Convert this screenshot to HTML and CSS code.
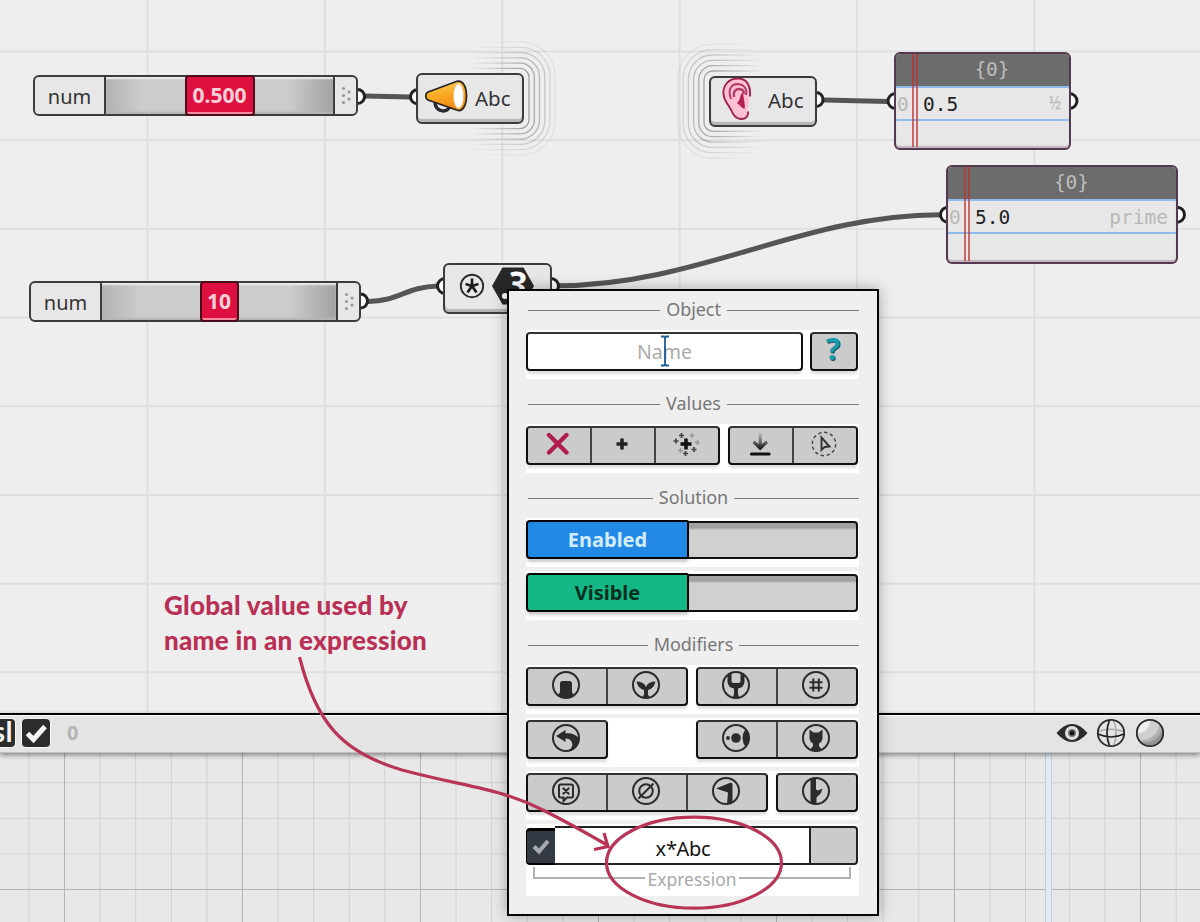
FILE: index.html
```html
<!DOCTYPE html>
<html lang="en">
<head>
<meta charset="UTF-8" />
<meta name="viewport" content="width=device-width, initial-scale=1" />
<title>Global value in an expression</title>
<link rel="stylesheet" href="styles.css">
</head>
<body>
  <main class="canvas">
    <!-- wires, ports and broadcast rings -->
    <svg class="wires" width="1200" height="713" viewBox="0 0 1200 713">
      <defs>
        <linearGradient id="fade-l" gradientUnits="userSpaceOnUse" x1="470" y1="0" x2="525" y2="0">
          <stop offset="0" stop-color="#fff" stop-opacity="0" /><stop offset="1" stop-color="#fff" />
        </linearGradient>
        <linearGradient id="fade-r" gradientUnits="userSpaceOnUse" x1="708" y1="0" x2="763" y2="0">
          <stop offset="0" stop-color="#fff" /><stop offset="1" stop-color="#fff" stop-opacity="0" />
        </linearGradient>
        <mask id="mask-l" maskUnits="userSpaceOnUse" x="460" y="30" width="110" height="140"><rect x="460" y="30" width="110" height="140" fill="url(#fade-l)" /></mask>
        <mask id="mask-r" maskUnits="userSpaceOnUse" x="670" y="30" width="110" height="140"><rect x="670" y="30" width="110" height="140" fill="url(#fade-r)" /></mask>
      </defs>
      <g mask="url(#mask-l)" fill="none" stroke="#222" stroke-width="1.3">
        <rect x="440" y="68.3" width="89" height="60.4" rx="9" opacity=".38" />
        <rect x="440" y="63.1" width="94.3" height="70.8" rx="14" opacity=".33" />
        <rect x="440" y="57.9" width="99.5" height="81.2" rx="19" opacity=".26" />
        <rect x="440" y="52.6" width="104.8" height="91.8" rx="24" opacity=".19" />
        <rect x="440" y="47.4" width="110" height="102.2" rx="29" opacity=".12" />
        <rect x="440" y="42.2" width="115.2" height="112.6" rx="34" opacity=".06" />
      </g>
      <g mask="url(#mask-r)" fill="none" stroke="#222" stroke-width="1.3">
        <rect x="704" y="71" width="100" height="60.4" rx="9" opacity=".38" />
        <rect x="698.8" y="65.7" width="105" height="71" rx="14" opacity=".33" />
        <rect x="693.6" y="60.3" width="110" height="81.8" rx="19" opacity=".26" />
        <rect x="688.4" y="55" width="115" height="92.4" rx="24" opacity=".19" />
        <rect x="683.2" y="49.7" width="120" height="103" rx="29" opacity=".12" />
        <rect x="678" y="44.4" width="125" height="113.6" rx="34" opacity=".06" />
      </g>
      <g class="wire">
        <path d="M365 96L410 97" />
        <path d="M824 100L888 101.5" />
        <path d="M368 301.5C400 301 405 287 438 286" />
        <path d="M556 285.8C700 285.5 800 215 940 214.7" />
      </g>
      <g class="port">
        <circle cx="357.5" cy="96.5" r="7" /><circle cx="417.5" cy="96.8" r="7" />
        <circle cx="816" cy="99.5" r="7" /><circle cx="895.5" cy="101" r="7.5" />
        <circle cx="1069.5" cy="101" r="7.5" /><circle cx="948" cy="214.7" r="7.5" />
        <circle cx="1177" cy="214.7" r="7.5" /><circle cx="360.5" cy="301" r="7" />
        <circle cx="445" cy="286" r="7.5" /><circle cx="551" cy="286" r="7.5" />
      </g>
    </svg>

    <div class="node slider slider-a">
      <span class="slider-name">num</span>
      <span class="slider-track"><b class="knob">0.500</b></span>
      <span class="slider-grip"><svg width="12" height="20" viewBox="0 0 12 20"><g fill="#999"><circle cx="2.500" cy="2.500" r="1.600"/><circle cx="8" cy="6" r="1.600"/><circle cx="2.500" cy="9.500" r="1.600"/><circle cx="8" cy="13" r="1.600"/><circle cx="2.500" cy="16.500" r="1.600"/></g></svg></span>
    </div>

    <div class="node slider slider-b">
      <span class="slider-name">num</span>
      <span class="slider-track"><b class="knob">10</b></span>
      <span class="slider-grip"><svg width="12" height="20" viewBox="0 0 12 20"><g fill="#999"><circle cx="2.500" cy="2.500" r="1.600"/><circle cx="8" cy="6" r="1.600"/><circle cx="2.500" cy="9.500" r="1.600"/><circle cx="8" cy="13" r="1.600"/><circle cx="2.500" cy="16.500" r="1.600"/></g></svg></span>
    </div>

    <div class="node param sender">
      <svg width="44" height="36" viewBox="0 0 44 36">
        <defs><linearGradient id="horn" x1="0" y1="0" x2=".3" y2="1"><stop offset="0" stop-color="#ffd968"/><stop offset=".45" stop-color="#fbb02a"/><stop offset="1" stop-color="#f08a10"/></linearGradient></defs>
        <path d="M11 24C12 34 25 34 25.500 27" fill="none" stroke="#262a2e" stroke-width="3.500"/>
        <path d="M4 13L33 2.300C39 1 42.500 8 42.500 17C42.500 26 39 32.500 34 31.500L4 21C1 19.500 1 14.500 4 13Z" fill="url(#horn)" stroke="#262320" stroke-width="1.700"/>
        <ellipse cx="34.500" cy="17" rx="5.200" ry="12.500" fill="#fff" stroke="#f4b868" stroke-width="1"/>
      </svg>
      <span>Abc</span>
    </div>

    <div class="node param receiver">
      <svg width="32" height="44" viewBox="0 0 32 44">
        <path d="M27 19.500C28.500 9 25 1.500 16 1.500C6 1.500 .8 9 1.500 17C2 24 5.500 26.500 8 31C11 37 13 42 19.500 42C25 42 26.500 38 26 34.500C25 31 28 26 27 19.500Z" fill="#ffc0d2"/>
        <path d="M28 19.500C29 9 25 1.500 16 1.500C6 1.500 .8 9 1.500 17C2 24 5.500 26.500 8 31C11 37 13 42 19.500 42C25 42 26.500 38 26 34.500" fill="none" stroke="#9c2350" stroke-width="1.900"/>
        <path d="M9 22C6 14 8 7.500 15 7C22 7 25.500 12 24 18" fill="none" stroke="#b13864" stroke-width="1.900"/>
        <path d="M12 20C11 15 13 12 17 12C20 12 22.500 14 21.500 17" fill="none" stroke="#b13864" stroke-width="2.500"/>
        <path d="M21 16C17 17 20 21 15 26C18 28 20 31 22.500 32C23.500 28 22 24 21 16Z" fill="#b51e55"/>
      </svg>
      <span>Abc</span>
    </div>

    <div class="node param multiply">
      <svg width="92" height="46" viewBox="0 0 92 46">
        <circle cx="15" cy="21" r="11.200" fill="none" stroke="#2b2b2b" stroke-width="1.900"/>
        <path d="M15 13.500V21L8.500 19M15 21L21.500 19M15 21L10.500 27.500M15 21L19.500 27.500" fill="none" stroke="#1c1c1c" stroke-width="2.700"/>
        <path d="M45.500 2.500H66.500L77 21L66.500 39.500H45.500L35 21Z" fill="#272727"/>
        <text class="digit" x="50" y="31" transform="rotate(8 58 22)">3</text>
        <circle cx="48" cy="31" r="3" fill="#fff"/>
      </svg>
    </div>

    <div class="node panel panel-a">
      <div class="panel-head">{0}</div>
      <div class="panel-row"><i>0</i><span>0.5</span><em class="half">½</em></div>
    </div>

    <div class="node panel panel-b">
      <div class="panel-head">{0}</div>
      <div class="panel-row"><i>0</i><span>5.0</span><em>prime</em></div>
    </div>
  </main>

  <section class="statusbar">
    <span class="tile tile-text">sl</span>
    <span class="tile"><svg width="28" height="28" viewBox="0 0 28 28"><path d="M5.500 14.500L11.500 20.500L23 7.500" fill="none" stroke="#f4f4f4" stroke-width="5"/></svg></span>
    <b class="count">0</b>
    <div class="view-icons">
      <svg class="eye" width="32" height="20" viewBox="0 0 32 20"><path d="M.5 10Q16-8 31.500 10Q16 28 .5 10Z" fill="#2c2c2c"/><circle cx="16" cy="10" r="7" fill="#e0e0e0"/><circle cx="16" cy="10" r="4" fill="#777"/><circle cx="16" cy="10" r="2.500" fill="#151515"/></svg>
      <svg width="30" height="30" viewBox="0 0 30 30" fill="none"><path d="M2.500 13.500Q14 9 27.500 13.500M17 1.500Q23 14 17.500 28.500" stroke="#aaa" stroke-width="1.500"/><circle cx="15" cy="15" r="13.200" stroke="#2b2b2b" stroke-width="1.800"/><path d="M2 16Q15 22 28 16M13.500 2Q8.500 15 13.500 28" stroke="#222" stroke-width="1.700"/></svg>
      <svg width="30" height="30" viewBox="0 0 30 30"><circle cx="15" cy="15" r="13.200" fill="#b0b0b0"/><path d="M4 22.500Q22 22 24.500 6A13 13 0 1 0 4 22.500Z" fill="#cfcfcf"/><path d="M2.500 16Q14 14 15.500 2A13 13 0 0 0 2.500 16Z" fill="#efefef"/><path d="M7 25Q24 24 27.500 10A13 13 0 0 1 7 25Z" fill="#949494"/><circle cx="15" cy="15" r="13.200" fill="none" stroke="#2b2b2b" stroke-width="1.800"/></svg>
    </div>
  </section>

  <section class="viewport">
    <div class="view view-left"></div>
    <div class="splitter"></div>
    <div class="view view-right"></div>
  </section>

  <aside class="menu">
    <h2>Object</h2>
    <div class="strip">
      <div class="name-field">Name
        <svg class="caret" width="10" height="32" viewBox="0 0 10 32"><path d="M1 1.500H4L5 3L6 1.500H9M5 3V29M1 30.500H4L5 29L6 30.500H9" fill="none" stroke="#1d5a96" stroke-width="1.800"/></svg>
      </div>
      <div class="group help"><button aria-label="Help"><b>?</b></button></div>
    </div>

    <h2>Values</h2>
    <div class="strip">
      <div class="group three-cols">
        <button aria-label="Clear"><svg width="24" height="24" viewBox="0 0 24 24"><path d="M3 3L20.500 20.500M20.500 3L3 20.500" fill="none" stroke="#b01c50" stroke-width="4.300" stroke-linecap="round"/></svg></button>
        <button aria-label="Add"><svg width="12" height="12" viewBox="0 0 12 12"><path d="M6 .5V11.500M.5 6H11.500" stroke="#222" stroke-width="3.500"/></svg></button>
        <button aria-label="Add many"><svg width="28" height="24" viewBox="0 0 28 24"><path d="M14 6.500V17.500M8.500 12H19.500" stroke="#111" stroke-width="3.500"/><path d="M9.500 1V6M7 3.500H12M4 6.500V11.500M1.500 9H6.500M22 15V20M19.500 17.500H24.500M13.500 19V24M11 21.500H16" stroke="#444" stroke-width="1.700"/><path d="M20 1V6M17.500 3.500H22.500M25.500 8V13M23 10.500H28M8.500 16V21M6 18.500H11" stroke="#999" stroke-width="1.500"/></svg></button>
      </div>
      <div class="group two-cols">
        <button aria-label="Internalise"><svg width="24" height="24" viewBox="0 0 24 24"><defs><linearGradient id="drop" gradientUnits="userSpaceOnUse" x1="0" y1="1" x2="0" y2="16"><stop offset="0" stop-color="#333" stop-opacity=".1"/><stop offset="1" stop-color="#222"/></linearGradient></defs><path d="M10.700 1H13.800V12L18 8.500L20 11L12.250 18.500L4.500 11L6.500 8.500L10.700 12Z" fill="url(#drop)"/><path d="M3.500 22H21" stroke="#111" stroke-width="3.200" stroke-linecap="round"/></svg></button>
        <button aria-label="Select"><svg width="26" height="26" viewBox="0 0 26 26" fill="none"><circle cx="13" cy="13" r="11.700" stroke="#444" stroke-width="1.400" stroke-dasharray="3.400 2.700"/><path d="M10.500 6.500L18.500 15.500L13.500 16L10.500 19Z" stroke="#333" stroke-width="1.900"/></svg></button>
      </div>
    </div>

    <h2>Solution</h2>
    <div class="strip toggle"><b class="on blue">Enabled</b><span class="off"></span></div>
    <div class="strip toggle"><b class="on green">Visible</b><span class="off"></span></div>

    <h2>Modifiers</h2>
    <div class="strip">
      <div class="group half-row">
        <button><svg class="mod" viewBox="0 0 28 28"><circle cx="14" cy="14" r="13"/><path d="M8 12.500Q8 10 10.500 10H17.500Q20 10 20 12.500V21L22 24.500Q14 29.500 6 24.500L8 21Z"/></svg></button>
        <button><svg class="mod" viewBox="0 0 28 28"><circle cx="14" cy="14" r="13"/><path d="M4.500 10.500Q12 10.500 14 16Q16 10.500 23.500 10.500Q22 17.500 16 19V23.500L18 27H10L12 23.500V19Q6 17.500 4.500 10.500Z"/></svg></button>
      </div>
      <div class="group half-row">
        <button><svg class="mod" viewBox="0 0 28 28"><circle cx="14" cy="14" r="13"/><path d="M5.500 4.500L9.500 2V10Q9.500 12 11.500 12H16.500Q18.500 12 18.500 10V2L22.500 4.500V11Q22 16.500 16 17.500V23L17.500 27H10.500L12 23V17.500Q6 16.500 5.500 11Z"/></svg></button>
        <button><svg class="mod" viewBox="0 0 28 28"><circle cx="14" cy="14" r="13"/><path class="line" d="M11.300 7.500V20.500M16.800 7.500V20.500M7.500 11.200H20.500M7.500 16.700H20.500"/></svg></button>
      </div>
    </div>
    <div class="strip">
      <div class="group single">
        <button><svg class="mod" viewBox="0 0 28 28"><circle cx="14" cy="14" r="13"/><path d="M4 12L13.500 6V9.300Q22 8.500 27 14Q26 25 16 27.200Q21.500 23 20 18.500Q18.500 14.500 13.500 14.500V18Z"/></svg></button>
      </div>
      <div class="group half-row">
        <button><svg class="mod" viewBox="0 0 28 28"><circle cx="14" cy="14" r="13"/><circle class="dot" cx="6" cy="14" r="1.900"/><circle class="dot" cx="14" cy="14" r="4.800"/><path d="M23.500 5Q17.500 14 23.500 23Q30.500 14 23.500 5Z"/></svg></button>
        <button><svg class="mod" viewBox="0 0 28 28"><circle cx="14" cy="14" r="13"/><path d="M7.500 5.500L11.500 8.500H16.500L20.500 5.500V14.500Q20 18 17 19.500V22L20 26Q14 28.500 8 26L11 22V19.500Q8 18 7.500 14.500Z"/></svg></button>
      </div>
    </div>
    <div class="strip">
      <div class="group three-mods">
        <button><svg class="mod" viewBox="0 0 28 28"><circle cx="14" cy="14" r="13"/><path class="line" d="M8.500 7.500H19.500Q21 7.500 21 9V19Q21 20.500 19.500 20.500H15L11.500 24V20.500H8.500Q7 20.500 7 19V9Q7 7.500 8.500 7.500ZM10.800 10.800L17.200 17.200M17.200 10.800L10.800 17.200"/></svg></button>
        <button><svg class="mod" viewBox="0 0 28 28"><circle cx="14" cy="14" r="13"/><circle class="line" cx="14" cy="14" r="6.800"/><path class="line" d="M6.500 21.500L21.500 6.500"/></svg></button>
        <button><svg class="mod" viewBox="0 0 28 28"><circle cx="14" cy="14" r="13"/><path d="M4 11.500L17.500 6Q20.500 5 20.500 8V25L15 27.500L16 15.500Z"/></svg></button>
      </div>
      <div class="group single">
        <button><svg class="mod" viewBox="0 0 28 28"><circle cx="14" cy="14" r="13"/><path d="M8.500 2.500L14 1V12.500L16 13.500L20.500 11.500L19 16L14.500 20.500V27H8.500Z"/></svg></button>
      </div>
    </div>
    <div class="strip expression">
      <div class="expr-row">
        <span class="expr-check"><svg width="20" height="18" viewBox="0 0 20 18"><path d="M3 8.500L8 13.500L17 3" fill="none" stroke="#a6a9ad" stroke-width="4.200"/></svg></span>
        <span class="expr-value">x*Abc</span>
        <span class="expr-more"></span>
      </div>
      <div class="bracket"><span class="arm-left"></span><label>Expression</label><span class="arm-right"></span></div>
    </div>
  </aside>

  <div class="note">
    <p>Global value used by<br>name in an expression</p>
  </div>
  <svg class="markup" width="1200" height="922" viewBox="0 0 1200 922">
    <path d="M299.500 657C316 722 341 752 402 770C470 788 500 788 545 811Q578 828 607 845" />
    <path d="M604 833L608 846.500L594 849.500" />
    <ellipse cx="694" cy="862.700" rx="87.500" ry="45.500" />
  </svg>
</body>
</html>
```
FILE: styles.css
```css
/* Reset */
* {
  box-sizing: border-box;
}
body {
  margin: 0;
  width: 1200px;
  height: 922px;
  position: relative;
  overflow: hidden;
  display: flex;
  flex-direction: column;
  font-family: "Noto Sans", "Open Sans", sans-serif;
  color: #333;
}
svg {
  display: block;
}

/* Node canvas */
.canvas {
  position: relative;
  height: 713px;
  background-color: #eeeeee;
  background-image:
    linear-gradient(to right, #dfdfdf 1.5px, transparent 1.5px),
    linear-gradient(to bottom, #dfdfdf 1.5px, transparent 1.5px);
  background-size: 177.4px 88.7px;
  background-position: 146.5px 50.5px;
}
.wires {
  position: absolute;
  left: 0;
  top: 0;
}
.wire {
  fill: none;
  stroke: #555;
  stroke-width: 5;
}
.port {
  fill: #fff;
  stroke: #222;
  stroke-width: 3;
}
.node {
  position: absolute;
  border: 2px solid #3c3c3c;
  border-radius: 6px;
  background: #e7e7e7;
}

/* Sliders */
.slider {
  display: flex;
  height: 41px;
  font-size: 20px;
}
.slider-a {
  left: 33px;
  top: 75px;
  width: 325px;
}
.slider-b {
  left: 29px;
  top: 281px;
  width: 332px;
}
.slider-name {
  width: 71px;
  border-right: 2px solid #3c3c3c;
  text-align: center;
  line-height: 40px;
}
.slider-track {
  flex: 1;
  display: flex;
  justify-content: center;
  background: linear-gradient(to right, #b2b2b2, #ccc 16%, #ccc 80%, #a2a2a2);
  box-shadow: inset 0 3px 2px -1px #ededed, inset 0 -2px 2px #b5b5b5;
}
.slider-grip {
  width: 23px;
  border-left: 2px solid #3c3c3c;
  padding: 9px 0 0 6px;
}
.knob {
  width: 70px;
  height: 41px;
  margin: -2px 0;
  border: 2px solid #4d0a1a;
  border-radius: 4px;
  background: #dd1040;
  box-shadow: inset 0 -3px 0 -1px #f98ba0;
  color: #ffd0d8;
  text-align: center;
  line-height: 37px;
  font-size: 21px;
}
.slider-b .knob {
  width: 39px;
}

/* Params */
.param {
  width: 108px;
  height: 51px;
  display: flex;
  align-items: center;
  font-size: 20.5px;
  box-shadow: inset 0 -3px 1px #b5b5b5;
}
.sender {
  left: 416px;
  top: 73px;
  padding-left: 6px;
  gap: 7px;
}
.sender svg {
  margin-top: -3px;
}
.sender span {
  margin-top: -2px;
}
.receiver {
  left: 709px;
  top: 76px;
  padding-left: 11px;
  gap: 14px;
}
.receiver svg {
  margin-top: -5px;
}
.receiver span {
  margin-top: -3px;
}
.multiply {
  left: 443px;
  top: 263px;
  width: 109px;
  padding-left: 12px;
}
.multiply svg {
  margin-top: -1px;
}
.digit {
  font: bold 34px "Noto Sans", sans-serif;
  fill: #fff;
}

/* Text panels */
.panel {
  border-color: #55394f;
  font: 19.5px "DejaVu Sans Mono", monospace;
  color: #222;
  overflow: hidden;
  box-shadow: inset 0 -2px 1px #c3b5bd;
}
.panel-a {
  left: 894px;
  top: 52px;
  width: 177px;
  height: 98px;
}
.panel-b {
  left: 946px;
  top: 165px;
  width: 232px;
  height: 99px;
}
.panel::after {
  content: "";
  position: absolute;
  left: 16px;
  top: 0;
  bottom: 1px;
  width: 2px;
  border: solid rgba(190, 50, 50, 0.7);
  border-width: 0 2px;
}
.panel-head {
  height: 32px;
  padding-left: 19px;
  background: #6c6c6c;
  color: #bdbdbd;
  text-align: center;
  line-height: 31px;
}
.panel-row {
  display: flex;
  height: 35px;
  padding-right: 8px;
  border: solid #8fbbee;
  border-width: 2px 0;
  line-height: 33px;
}
.panel-row i {
  width: 27px;
  padding-left: 1px;
  font-style: normal;
  color: #b8b8b8;
}
.panel-row em {
  margin-left: auto;
  font-style: normal;
  color: #b8b8b8;
}
.panel-row .half {
  font-family: "Liberation Mono", monospace;
}

/* Status bar */
.statusbar {
  display: flex;
  align-items: center;
  gap: 7px;
  height: 40px;
  padding: 0 35px 2px 0;
  position: relative;
  z-index: 1;
  background: #e4e4e4;
  border-top: 2px solid #000;
  border-bottom: 1px solid #c2c2c2;
  box-shadow: inset 0 1px 0 #fff, 0 2px 5px rgba(0, 0, 0, 0.45);
}
.tile {
  width: 28px;
  height: 28px;
  border-radius: 4px;
  background: #2c2c2c;
  box-shadow: 0 0 0 1px #f5f5f5;
}
.tile-text {
  margin-left: -13px;
  padding-left: 5px;
  color: #f4f4f4;
  font-size: 27px;
  font-weight: 600;
  line-height: 25px;
}
.count {
  margin-left: 10px;
  color: #b5b5b5;
  font-size: 20px;
  line-height: 34px;
}
.view-icons {
  display: flex;
  align-items: center;
  gap: 9px;
  margin-left: auto;
}
.eye {
  margin-right: -1px;
}

/* Viewports */
.viewport {
  flex: 1;
  display: flex;
}
.view {
  background-color: #e8e8e8;
  background-image:
    linear-gradient(to right, #b4b4b4 1px, transparent 1px),
    linear-gradient(to bottom, #b4b4b4 1px, transparent 1px),
    linear-gradient(to right, #d0d0d0 1px, transparent 1px),
    linear-gradient(to bottom, #d0d0d0 1px, transparent 1px);
  background-size: 178px 178px, 178px 178px, 35.6px 35.6px, 35.6px 35.6px;
  background-position: 64px 136px;
}
.view-left {
  width: 1045px;
}
.splitter {
  width: 7px;
  background: #e4eaf5;
  border: solid #c3cfdf;
  border-width: 0 1px;
}
.view-right {
  flex: 1;
  background-position: 88px 136px;
}

/* Context menu */
.menu {
  position: absolute;
  z-index: 2;
  left: 507px;
  top: 289px;
  width: 372px;
  height: 627px;
  padding: 0 17px;
  border: 2px solid #050505;
  background: #efefef;
  box-shadow: 0 0 14px rgba(0, 0, 0, 0.3);
}
.menu h2 {
  display: flex;
  align-items: center;
  gap: 6px;
  height: 39px;
  margin: 6px 1px 0 2px;
  padding-bottom: 3px;
  font-size: 18px;
  font-weight: 400;
  letter-spacing: -0.05px;
  color: #777;
}
.menu h2:first-child {
  margin-top: 0;
}
.menu h2::before,
.menu h2::after {
  content: "";
  flex: 1;
  height: 1px;
  margin-top: 2px;
  background: #7c7c7c;
}
.strip {
  display: flex;
  justify-content: space-between;
  height: 49px;
  margin-right: 1px;
  padding: 2px 1px 0 0;
  background: #fff;
}
.strip + .strip {
  margin-top: 4px;
}
.group,
.name-field {
  height: 39px;
  border: 2px solid #111;
  border-top-color: #333;
  border-radius: 4px;
  box-shadow: 0 4px 3px -1px #ddd;
}
.group {
  display: flex;
  background: #cbcbcb;
}
.group button {
  flex: 1;
  display: flex;
  justify-content: center;
  align-items: center;
  padding: 0 2px 3px 0;
  border: 0;
  background: none;
  font-family: inherit;
}
.group button + button {
  border-left: 2px solid #444;
}
.name-field {
  position: relative;
  width: 277px;
  background: #fff;
  color: #aaa;
  font-size: 19.5px;
  line-height: 36px;
  text-align: center;
}
.caret {
  position: absolute;
  left: 132px;
  top: 1px;
}
.help {
  width: 48px;
}
.help b {
  margin-top: -3px;
  color: #159aae;
  font-size: 30px;
  line-height: 32px;
  text-shadow: 1px 1px 0 #34525c;
}
.three-cols {
  width: 194px;
}
.two-cols {
  width: 130px;
}
.half-row {
  width: 162px;
}
.single {
  width: 82px;
}
.three-mods {
  width: 242px;
}
.mod {
  width: 28px;
  height: 28px;
  fill: #2b2b2b;
}
.mod circle,
.mod .line {
  fill: none;
  stroke: #2b2b2b;
  stroke-width: 2;
}
.mod .dot {
  fill: #2b2b2b;
  stroke: none;
}

/* Toggles */
.on {
  width: 163px;
  height: 39px;
  border: 2px solid #050505;
  border-radius: 4px 2px 0 4px;
  box-shadow: 0 4px 3px -1px #ccc;
  font-size: 20px;
  line-height: 35px;
  text-align: center;
}
.blue {
  background: #228ae6;
  color: #d3ecff;
}
.green {
  background: #13b886;
  color: #05301f;
}
.off {
  flex: 1;
  height: 38px;
  margin-top: 1px;
  border: 2px solid #111;
  border-left: 0;
  border-radius: 0 4px 4px 0;
  background: linear-gradient(#a2a2a2 5px, #d0d0d0 7px);
}

/* Expression row */
.expression {
  display: block;
  height: 72px;
}
.expr-row {
  display: flex;
  height: 39px;
}
.expr-check {
  width: 29px;
  height: 37px;
  margin-top: 2px;
  padding: 7px 0 0 4px;
  border: solid #000;
  border-width: 3px 0 2px 1px;
  border-radius: 4px 0 0 4px;
  background: #343a43;
}
.expr-value {
  flex: 1;
  padding-left: 2px;
  border: solid #222;
  border-width: 2px 2px 2px 0;
  color: #111;
  font-size: 20px;
  letter-spacing: -0.3px;
  line-height: 42px;
  text-align: center;
}
.expr-more {
  width: 47px;
  border: 2px solid #222;
  border-left: 0;
  border-radius: 0 4px 4px 0;
  background: #cbcbcb;
}
.bracket {
  display: flex;
  gap: 2px;
  margin: 2px 7px 0;
}
.bracket span {
  flex: 1;
  height: 12px;
  border: solid #b2b2b2;
  border-width: 0 0 2px 2px;
}
.bracket .arm-right {
  border-width: 0 2px 2px 0;
}
.bracket label {
  height: 24px;
  color: #aaa;
  font-size: 17.5px;
  line-height: 25px;
}

/* Annotation */
.note {
  position: absolute;
  left: 164px;
  top: 588px;
  color: #b92f55;
  font: 900 26px/35px Lato, "Open Sans", sans-serif;
  letter-spacing: 0.27px;
}
.note p {
  margin: 0;
}
.markup {
  position: absolute;
  z-index: 3;
  left: 0;
  top: 0;
  fill: none;
  stroke: #b93558;
  stroke-width: 3.2;
}
```
